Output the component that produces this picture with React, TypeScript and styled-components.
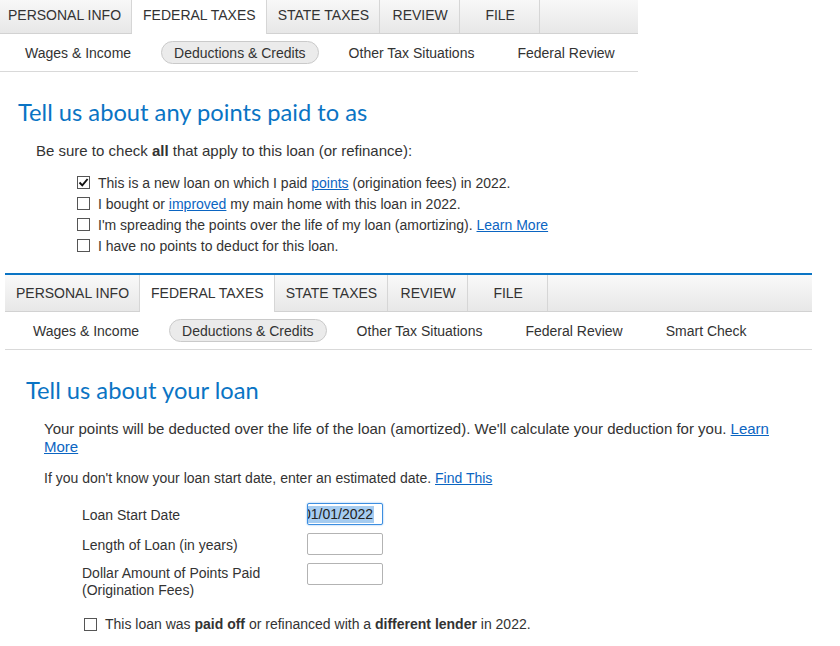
import React from "react";
import styled, { createGlobalStyle } from "styled-components";

const tabs = ["PERSONAL INFO", "FEDERAL TAXES", "STATE TAXES", "REVIEW", "FILE"];

const GlobalStyle = createGlobalStyle`
  html, body {
    margin: 0;
    padding: 0;
    background: #fff;
  }
  body {
    font-family: "Liberation Sans", Arial, sans-serif;
    font-size: 14px;
    color: #333;
  }
  * {
    box-sizing: border-box;
  }
`;

const Header: React.FC<{ sections: string[] }> = ({ sections }) => (
  <>
    <TabBar>
      {tabs.map((t) => (
        <Tab key={t} active={t === "FEDERAL TAXES"}>
          {t}
        </Tab>
      ))}
    </TabBar>
    <SubNav>
      {sections.map((s) => (
        <SubItem key={s} current={s === "Deductions & Credits"}>
          {s}
        </SubItem>
      ))}
    </SubNav>
  </>
);

const CheckBox: React.FC<{ checked?: boolean }> = ({ checked }) => (
  <Box>
    {checked && (
      <svg width="11" height="11" viewBox="0 0 11 11">
        <path d="M1.5 5.5 L4.3 8.4 L9.6 2" fill="none" stroke="#111" strokeWidth="1.9" />
      </svg>
    )}
  </Box>
);

const App: React.FC = () => {
  return (
    <Page>
      <GlobalStyle />
      <TopShot>
        <Panel cropped>
          <Header sections={["Wages & Income", "Deductions & Credits", "Other Tax Situations", "Federal Review"]} />
          <Title>Tell us about any points paid to as</Title>
          <Para>
            Be sure to check <b>all</b> that apply to this loan (or refinance):
          </Para>
          <CheckList>
            <CheckRow>
              <CheckBox checked />
              <span>
                This is a new loan on which I paid <Link>points</Link> (origination fees) in 2022.
              </span>
            </CheckRow>
            <CheckRow>
              <CheckBox />
              <span>
                I bought or <Link>improved</Link> my main home with this loan in 2022.
              </span>
            </CheckRow>
            <CheckRow>
              <CheckBox />
              <span>
                I'm spreading the points over the life of my loan (amortizing). <Link>Learn More</Link>
              </span>
            </CheckRow>
            <CheckRow>
              <CheckBox />
              <span>I have no points to deduct for this loan.</span>
            </CheckRow>
          </CheckList>
        </Panel>
      </TopShot>

      <BottomShot>
        <Header
          sections={["Wages & Income", "Deductions & Credits", "Other Tax Situations", "Federal Review", "Smart Check"]}
        />
        <Title>Tell us about your loan</Title>
        <Para>
          Your points will be deducted over the life of the loan (amortized). We'll calculate your deduction for
          you. <Link>Learn More</Link>
        </Para>
        <Para gap={13} small>
          If you don't know your loan start date, enter an estimated date. <Link>Find This</Link>
        </Para>
        <Form>
          <FieldLabel>Loan Start Date</FieldLabel>
          <Field focused>
            <Selected>01/01/2022</Selected>
          </Field>
          <FieldLabel>Length of Loan (in years)</FieldLabel>
          <Field />
          <FieldLabel>
            Dollar Amount of Points Paid
            <br />
            (Origination Fees)
          </FieldLabel>
          <Field />
        </Form>
        <LastRow>
          <CheckBox />
          <span>
            This loan was <b>paid off</b> or refinanced with a <b>different lender</b> in 2022.
          </span>
        </LastRow>
      </BottomShot>
    </Page>
  );
};

const Page = styled.div`
  width: 840px;
  height: 646px;
  overflow: hidden;
`;

const TopShot = styled.div`
  width: 638px;
  height: 262px;
  overflow: hidden;
`;

const Panel = styled.div<{ cropped?: boolean }>`
  margin: ${(p) => (p.cropped ? "-3px 0 0 -3px" : "0")};
  width: 641px;
`;

const BottomShot = styled.div`
  margin: 11px 0 0 5px;
  width: 807px;
  border-top: 2px solid #0a74c4;
`;

const TabBar = styled.div`
  display: flex;
  height: 37px;
  background: linear-gradient(#f9f9f9, #e7e7e7);
  border-bottom: 1px solid #d2d2d2;
`;

const Tab = styled.div<{ active?: boolean }>`
  display: flex;
  align-items: center;
  justify-content: center;
  min-width: 80px;
  padding: 0 10px 1px 11px;
  height: ${(p) => (p.active ? "37px" : "36px")};
  border-right: 1px solid #d6d6d6;
  background: ${(p) => (p.active ? "#fff" : "transparent")};
  font-family: "Liberation Sans", Arial, sans-serif;
  font-size: 14px;
  color: #333;
  white-space: nowrap;
`;

const SubNav = styled.div`
  display: flex;
  align-items: center;
  gap: 17px;
  height: 38px;
  padding: 0 0 0 15px;
  border-bottom: 1px solid #d9d9d9;
`;

const SubItem = styled.div<{ current?: boolean }>`
  display: flex;
  align-items: center;
  height: 23px;
  padding: 0 12px;
  border-radius: 12px;
  border: 1px solid ${(p) => (p.current ? "#cacaca" : "transparent")};
  background: ${(p) => (p.current ? "#ebebeb" : "transparent")};
  font-family: "Liberation Sans", Arial, sans-serif;
  font-size: 14px;
  color: #333;
  white-space: nowrap;
`;

const Title = styled.h1`
  margin: 26px 0 0 21px;
  font-family: Lato, "Open Sans", sans-serif;
  font-weight: 400;
  font-size: 23.7px;
  line-height: 28px;
  color: #0a74c4;
`;

const Para = styled.p<{ gap?: number; small?: boolean }>`
  margin: ${(p) => p.gap ?? 16}px 40px 0 39px;
  font-size: ${(p) => (p.small ? 14 : 15)}px;
  line-height: 18px;
  color: #333;
`;

const Link = styled.a`
  color: #0b65c2;
  text-decoration: underline;
  cursor: pointer;
`;

const CheckList = styled.div`
  display: flex;
  flex-direction: column;
  margin: 12px 0 0 80px;
`;

const CheckRow = styled.div`
  display: flex;
  align-items: center;
  gap: 8px;
  height: 21px;
  font-size: 14px;
  color: #333;
`;

const Box = styled.span`
  display: inline-flex;
  align-items: center;
  justify-content: center;
  flex: none;
  width: 13px;
  height: 13px;
  border: 1px solid #555;
  background: #fff;
`;

const Form = styled.div`
  display: grid;
  grid-template-columns: 225px 76px;
  row-gap: 8px;
  align-items: start;
  margin: 16px 0 0 77px;
`;

const FieldLabel = styled.div`
  min-height: 22px;
  display: flex;
  align-items: center;
  font-size: 14px;
  line-height: 17px;
  color: #333;
  padding-top: 2px;
`;

const Field = styled.div<{ focused?: boolean }>`
  display: flex;
  align-items: center;
  height: 22px;
  width: 76px;
  overflow: hidden;
  border: 1px solid ${(p) => (p.focused ? "#3d8ee0" : "#b3b3b3")};
  border-radius: 2px;
  box-shadow: ${(p) => (p.focused ? "0 0 2px #7db6ee" : "none")};
  background: #fff;
  font-size: 14px;
  color: #222;
`;

const Selected = styled.span`
  margin-left: -5px;
  padding-right: 1px;
  background: #a6ccf0;
  line-height: 17px;
  white-space: nowrap;
`;

const LastRow = styled.div`
  display: flex;
  align-items: center;
  gap: 8px;
  margin: 16px 0 0 79px;
  height: 18px;
  font-size: 14px;
  color: #333;
`;

export default App;
